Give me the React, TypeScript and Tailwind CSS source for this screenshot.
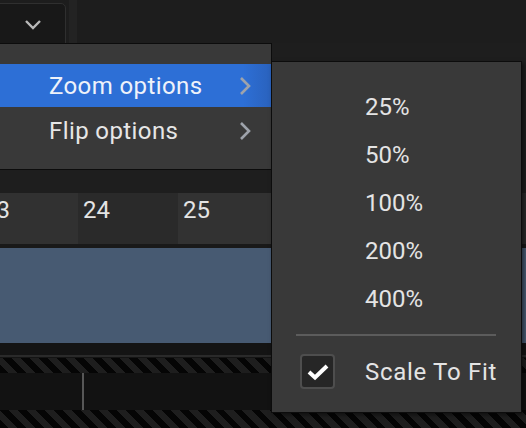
import React from "react";

const Chevron = () => (
  <svg width="12" height="20" viewBox="0 0 12 20" className="shrink-0">
    <polyline points="2,2 10,10 2,18" fill="none" stroke="#9ea3ab" strokeWidth="2.6" strokeLinejoin="miter" />
  </svg>
);

const stripes = {
  backgroundImage:
    "repeating-linear-gradient(45deg, #050505 0px, #050505 6px, #1e1e1e 6px, #1e1e1e 12.7px)",
};

export default function App() {
  const cells = [
    { key: "c23", label: "23", bg: "bg-[#313131]", ml: "-ml-[22px]" },
    { key: "c24", label: "24", bg: "bg-[#2a2a2a]", ml: "" },
    { key: "c25", label: "25", bg: "bg-[#323232]", ml: "" },
    { key: "c26", label: "", bg: "bg-[#2a2a2a]", ml: "" },
    { key: "c27", label: "", bg: "bg-[#323232]", ml: "" },
    { key: "c28", label: "", bg: "bg-[#2a2a2a]", ml: "" },
  ];
  return (
    <div
      className="relative w-[526px] h-[428px] overflow-hidden bg-[#1c1c1c] text-[#e6e6e6]"
      style={{ fontFamily: "Roboto, 'Noto Sans', sans-serif" }}
    >
      {/* top bar */}
      <div className="h-[43px] flex items-start bg-[#1d1d1d]">
        <div className="mt-[3px] -ml-[4px] w-[70px] h-[44px] rounded-tr-[5px] border border-[#2f2f2f] bg-[#181818] flex justify-center pt-[15px]">
          <svg width="18" height="12" viewBox="0 0 18 12" className="ml-[4px]">
            <polyline points="2,2 9,9 16,2" fill="none" stroke="#b9b9b9" strokeWidth="2.4" />
          </svg>
        </div>
        <div className="ml-[3px] w-[8px] h-[43px] bg-[#232323]" />
      </div>
      {/* band */}
      <div className="h-[150px] bg-[#1e1e1e]" />
      {/* timeline header */}
      <div className="h-[51px] flex">
        {cells.map((c) => (
          <div key={c.key} className={`${c.bg} ${c.ml} w-[100px] shrink-0 h-full pl-[5px] pt-[2px] text-[24px] leading-[30px] text-[#e4e4e4]`}>
            {c.label}
          </div>
        ))}
      </div>
      <div className="h-[4px] bg-[#191919]" />
      <div className="h-[95px] bg-[#475a72]" />
      <div className="h-[12px] bg-[#141414]" />
      <div className="h-[2px] bg-[#2a2a2a]" />
      <div className="h-[1px] bg-[#141414]" />
      <div className="h-[15px]" style={stripes} />
      <div className="h-[37px] bg-[#121212] flex">
        <div className="ml-[82px] w-[2px] h-full bg-[#575757]" />
      </div>
      <div className="h-[18px]" style={stripes} />

      {/* first menu */}
      <div className="absolute left-[-10px] top-[43px] w-[282px] h-[127px] bg-[#393939] border border-[#0c0c0c] pt-[20px]">
        <div className="h-[43px] flex items-center pl-[58px] pr-[20px] pt-[1px] bg-gradient-to-r from-[#2d6fd6] from-90% to-[#2a62bd] text-[24px] tracking-[0.4px]">
          <span className="flex-1 text-[#eef2fa]">Zoom options</span>
          <Chevron />
        </div>
        <div className="h-[44px] flex items-center pl-[58px] pr-[20px] pt-[3px] text-[24px] tracking-[0.4px]">
          <span className="flex-1 text-[#e6e6e6]">Flip options</span>
          <Chevron />
        </div>
      </div>

      {/* submenu */}
      <div className="absolute left-[271px] top-[61px] w-[251px] h-[352px] bg-[#393939] border border-[#0c0c0c] shadow-[2px_2px_4px_rgba(0,0,0,0.5)] pt-[21px]">
        {["25%", "50%", "100%", "200%", "400%"].map((p) => (
          <div key={p} className="h-[48px] flex items-center pl-[93px] text-[24px] text-[#e4e4e4]">
            {p}
          </div>
        ))}
        <div className="mt-[11px] ml-[24px] w-[200px] h-[2px] bg-[#5c5c5c]" />
        <div className="mt-[17px] flex items-center">
          <div className="ml-[28px] w-[35px] h-[35px] rounded-[4px] border-2 border-[#4e4e4e] bg-[#262626] flex items-center justify-center">
            <svg width="24" height="20" viewBox="0 0 24 20">
              <polyline points="3,10 9,15.5 21,4" fill="none" stroke="#ffffff" strokeWidth="4" />
            </svg>
          </div>
          <span className="ml-[30px] pt-[1px] text-[24px] tracking-[0.7px] text-[#e4e4e4]">Scale To Fit</span>
        </div>
      </div>
    </div>
  );
}
